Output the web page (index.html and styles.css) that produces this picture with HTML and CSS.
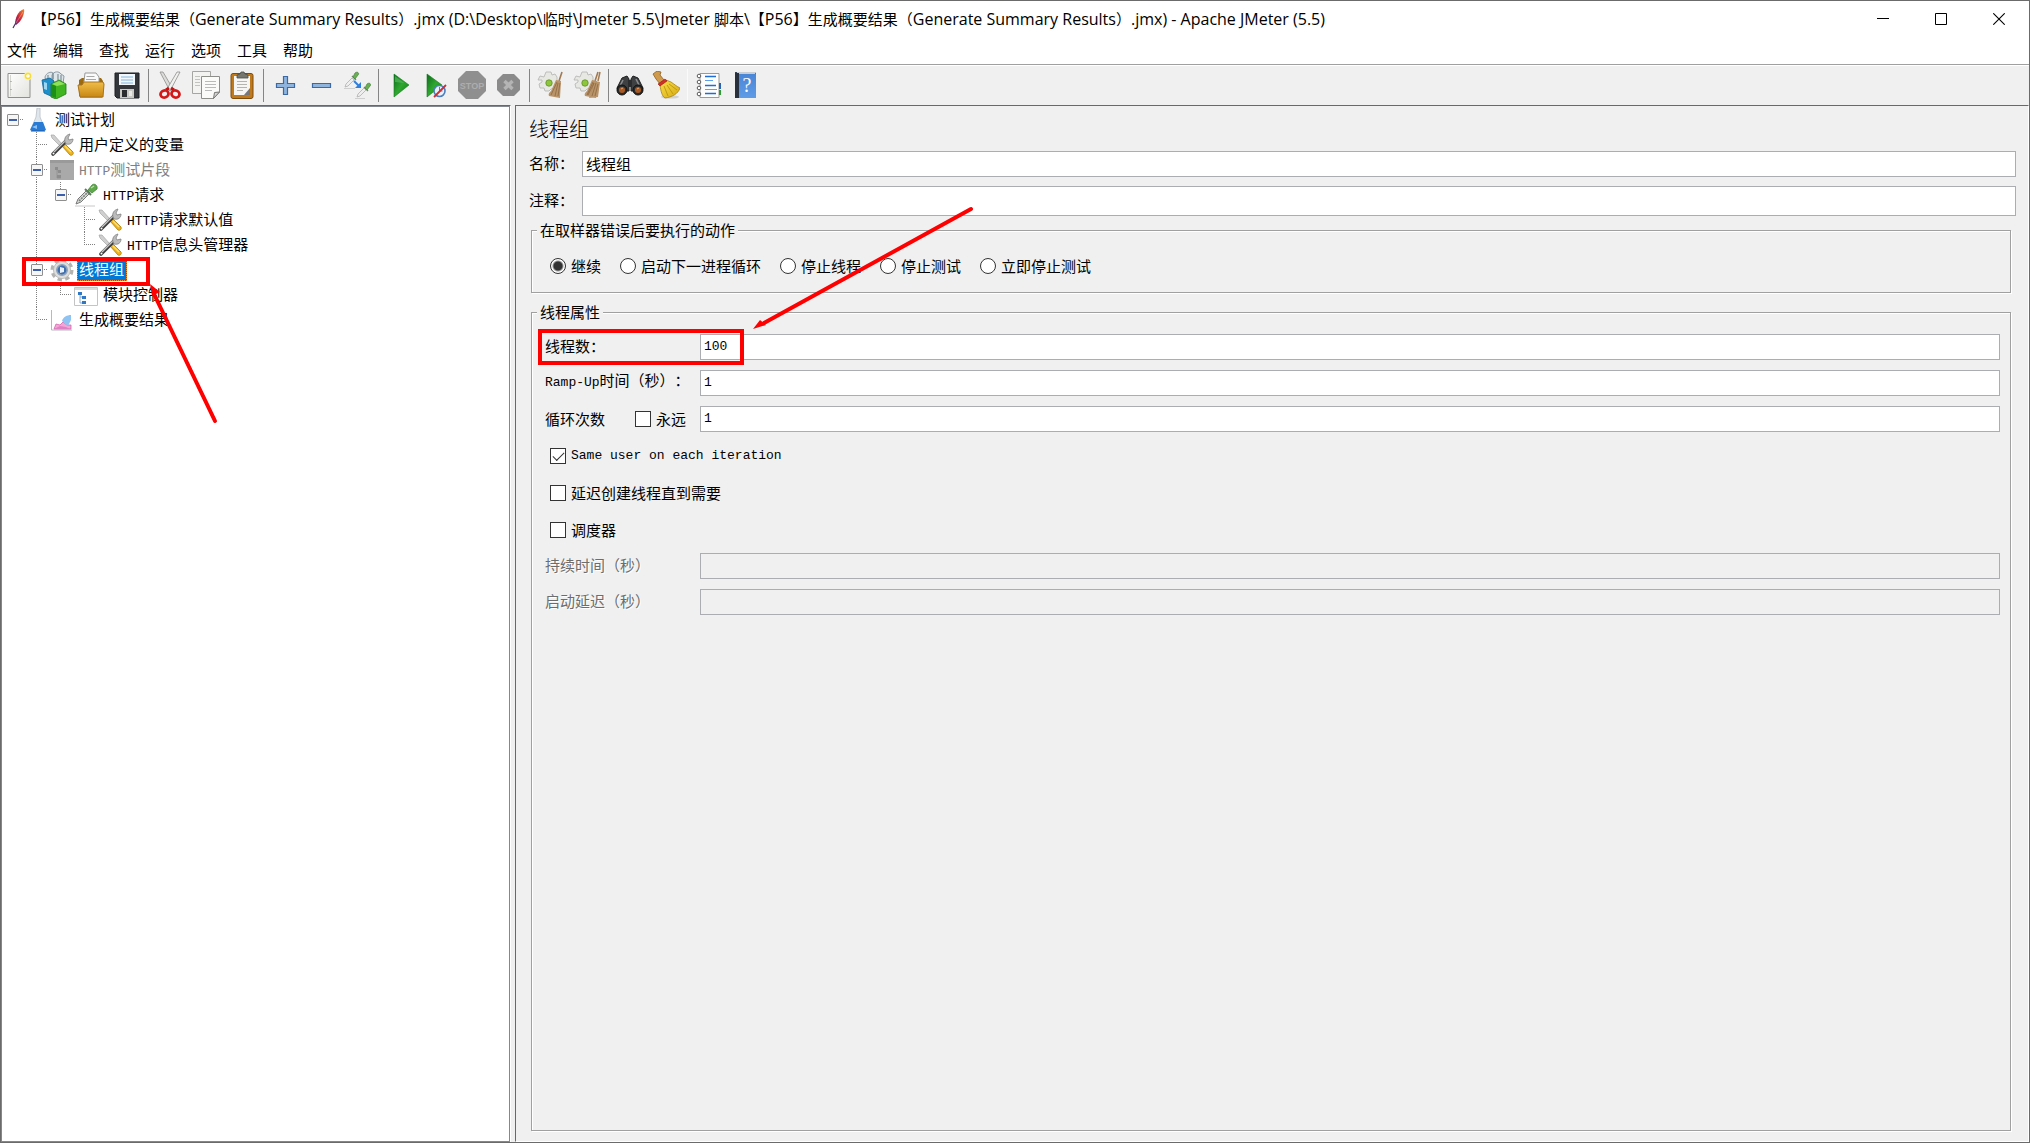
FILE: index.html
```html
<!DOCTYPE html>
<html lang="zh-CN">
<head>
<meta charset="utf-8">
<title>Apache JMeter (5.5)</title>
<link rel="stylesheet" href="styles.css">
</head>
<body>
<svg class="defs" aria-hidden="true">
  <defs>
    <linearGradient id="gGreen" x1="0" y1="0" x2="1" y2="1"><stop offset="0" stop-color="#0d6b1c"/><stop offset=".5" stop-color="#2fa82f"/><stop offset="1" stop-color="#0b7a12"/></linearGradient>
    <linearGradient id="gFolder" x1="0" y1="0" x2="0" y2="1"><stop offset="0" stop-color="#f0bd4a"/><stop offset="1" stop-color="#c98712"/></linearGradient>
    <linearGradient id="gPage" x1="0" y1="0" x2="1" y2="1"><stop offset="0" stop-color="#ffffff"/><stop offset="1" stop-color="#e2e2de"/></linearGradient>
    <linearGradient id="gBroom" x1="0" y1="0" x2="1" y2="1"><stop offset="0" stop-color="#fbe14c"/><stop offset="1" stop-color="#d6a70d"/></linearGradient>
    <linearGradient id="gBook" x1="0" y1="0" x2="0" y2="1"><stop offset="0" stop-color="#4a86d6"/><stop offset="1" stop-color="#5f9be6"/></linearGradient>
    <linearGradient id="gFeather" x1="0" y1="1" x2="1" y2="0"><stop offset="0" stop-color="#5d2a7a"/><stop offset=".4" stop-color="#c8203c"/><stop offset="1" stop-color="#f08a24"/></linearGradient>
    <symbol id="tools" viewBox="0 0 24 24">
      <path d="M1 2l3 0 8 9-2 2-8-8z" fill="#d0d0d0" stroke="#9a9a9a" stroke-width=".6"/>
      <path d="M12 13l3-2 8 8c1 2-1 4-3 3z" fill="#f0b51c" stroke="#a9790c" stroke-width=".8"/>
      <path d="M15 13l6 6" stroke="#ffe27a" stroke-width="1.2"/>
      <path d="M3 21L16 8" stroke="#3f3f3f" stroke-width="3.6" stroke-linecap="round"/>
      <path d="M4 19L15 8" stroke="#c4c4c4" stroke-width="1.4"/>
      <path d="M15 9c-1-4 1-7 5-8l-2 4 1 2 4-1c0 4-3 6-7 5z" fill="#bcbcbc" stroke="#808080" stroke-width=".8"/>
      <circle cx="3.500" cy="20.500" r="1" fill="#fff"/>
    </symbol>
    <symbol id="dropper" viewBox="0 0 24 24">
      <path d="M1 23h20" stroke="#c8c8c8" stroke-width="1"/>
      <path d="M2 21l2-5 9-9 3 3-9 9z" fill="#d8dcd8" stroke="#777" stroke-width="1"/>
      <path d="M5 18l8-8" stroke="#7b817b" stroke-width="1.6" stroke-dasharray="2 1"/>
      <path d="M11 6l6 6" stroke="#5c7a5c" stroke-width="2"/>
      <path d="M14 7l4-5c2-2 6 0 5 4l-5 4z" fill="#5fa94c" stroke="#3f8433" stroke-width=".8"/>
      <path d="M17 5l3-2" stroke="#b9e0a8" stroke-width="1.400"/>
    </symbol>
    <symbol id="broomSmall" viewBox="0 0 26 28">
      <path d="M9 1h5l1 3 3-1 2 3v6h-1l1 4-6 2-2 2H8l-1-3-4 0-1-4 3-2v-2L1 9l2-4 4 1z" fill="#e7e7e4" stroke="#b8b8b5" stroke-width=".9"/>
      <circle cx="12" cy="12" r="3.200" fill="#8dc63a" stroke="#5f8f24" stroke-width=".8"/>
      <path d="M25 1l-3 9" stroke="#a07a50" stroke-width="1.600"/>
      <path d="M19 9l5 1-1 17-11-2c-1-2 0-3 2-5z" fill="#b9946a"/>
      <path d="M20 11l-6 13M21 12l-3 13M23 12l-2 13" stroke="#8d6740" stroke-width=".8"/>
    </symbol>
  </defs>
</svg>

<div class="window">
  <header class="titlebar">
    <svg class="feather" viewBox="0 0 14 20" aria-hidden="true"><path d="M1 19L6 10" stroke="#4a2c63" stroke-width="1.200"/><path d="M3 15C3 9 6 2 12 0c1 4-2 12-8 16z" fill="url(#gFeather)"/><path d="M4 14L11 3" stroke="#fff" stroke-opacity=".45" stroke-width=".7"/></svg>
    <h1 class="caption"><span class="cjk">【</span>P56<span class="cjk">】生成概要结果（</span>Generate Summary Results<span class="cjk">）</span>.jmx (D:\Desktop\<span class="cjk">临时</span>\Jmeter 5.5\Jmeter <span class="cjk">脚本</span>\<span class="cjk">【</span>P56<span class="cjk">】生成概要结果（</span>Generate Summary Results<span class="cjk">）</span>.jmx) - Apache JMeter (5.5)</h1>
    <div class="winbuttons">
      <button type="button" aria-label="最小化"><svg viewBox="0 0 12 12"><path d="M0 5.500h12" stroke="#000"/></svg></button>
      <button type="button" aria-label="最大化"><svg viewBox="0 0 12 12"><path d="M.5.5h11v11H.5z" fill="none" stroke="#000"/></svg></button>
      <button type="button" aria-label="关闭"><svg viewBox="0 0 12 12"><path d="M.3.3l11.400 11.400M11.700.3L.3 11.700" stroke="#000" stroke-width="1.100"/></svg></button>
    </div>
  </header>

  <nav class="menubar">
    <button type="button">文件</button>
    <button type="button">编辑</button>
    <button type="button">查找</button>
    <button type="button">运行</button>
    <button type="button">选项</button>
    <button type="button">工具</button>
    <button type="button">帮助</button>
  </nav>

  <div class="toolbar" role="toolbar">
    <button type="button" aria-label="新建"><svg viewBox="0 0 28 28"><path d="M3 2.500h22v24H3z" fill="url(#gPage)" stroke="#8e8e8a"/><path d="M5.500 4v21" stroke="#d5d5d2"/><circle cx="23" cy="5" r="4" fill="#fdf3a0"/><circle cx="23" cy="5" r="2.500" fill="#fff" stroke="#f3dc3c" stroke-width="1.400"/><path d="M6 10v1M6 18v1" stroke="#888"/></svg></button>
    <button type="button" aria-label="模板"><svg viewBox="0 0 28 28"><path d="M4 6c1-4 6-6 8-4v9H5zM11 4c2-4 7-4 9-1l3 2-1 8H11z" fill="#dfe6ea" stroke="#8b9aa5"/><path d="M7 4v5M12 2v6M17 3v6M20 4v6" stroke="#7f8f9a" stroke-width="1.200"/><path d="M1 9l8-2 4 3-1 16-9-4z" fill="#1f8fcb" stroke="#0d6698" stroke-width=".8"/><path d="M3 11l3 1v7l-3-1z" fill="#9bd6f3"/><path d="M10 13l8-4 7 4v10l-10 5-5-2z" fill="#3fb51f" stroke="#1d7d10" stroke-width=".8"/><path d="M10 13l5 2v12l-5-2z" fill="#1b8f16"/><path d="M11 13l7-3 6 3-8 2z" fill="#8fe05a"/></svg></button>
    <button type="button" aria-label="打开"><svg viewBox="0 0 28 28"><path d="M2 9l3-2h19l2 3v15H2z" fill="#9b6a10"/><path d="M8 2h11l3 4v12H6z" fill="#fafafa" stroke="#999"/><path d="M9.500 5.500h8M9 8.500h10M9 11.500h10" stroke="#a8a8a8"/><path d="M1 14h4l2-3h19l1 2-1 13H3z" fill="url(#gFolder)" stroke="#a8731a"/><path d="M3 26.500h22" stroke="#8b6a31" stroke-opacity=".5"/></svg></button>
    <button type="button" aria-label="保存"><svg viewBox="0 0 28 28"><path d="M2 2h24v25H4l-2-2z" fill="#33363b"/><path d="M2 2h24v25H4l-2-2z" fill="none" stroke="#1c1e22"/><path d="M6 3h16v11H6z" fill="#f2f7fb"/><path d="M8 6h12M8 9h12M8 12h12" stroke="#86b4dc"/><path d="M7 18h14v9H7z" fill="#c9c9c6"/><path d="M9 19h5v7H9z" fill="#2a2c30"/><path d="M16 20h3v5h-3z" fill="#e9e9e7"/></svg></button>
    <span class="sep"></span>
    <button type="button" aria-label="剪切"><svg viewBox="0 0 28 28"><path d="M4 1l3 0 10 17-3 2z" fill="#dcdcda" stroke="#8d8d8a" stroke-width=".8"/><path d="M24 1l-3 0L11 18l3 2z" fill="#f1f1ef" stroke="#8d8d8a" stroke-width=".8"/><path d="M13 17l-3 2M15 17l3 2" stroke="#c31313" stroke-width="3"/><ellipse cx="8.500" cy="23" rx="4" ry="3.400" fill="none" stroke="#d41818" stroke-width="2.800" transform="rotate(-20 8.500 23)"/><ellipse cx="19.500" cy="23" rx="4" ry="3.400" fill="none" stroke="#d41818" stroke-width="2.800" transform="rotate(20 19.500 23)"/></svg></button>
    <button type="button" aria-label="复制"><svg viewBox="0 0 28 28"><path d="M.5.5h18v22H.5z" fill="#f3f3f1" stroke="#a5a5a2"/><path d="M3 5.500h5M3 8.500h5M3 11.500h5M3 14.500h5" stroke="#c2c2bf"/><path d="M9.500 5.500h18V21l-6 6.500h-12z" fill="#fbfbfa" stroke="#8e8e8b"/><path d="M13 10.500h11M13 13.500h11M13 16.500h11M13 19.500h7" stroke="#bababa"/><path d="M21.500 27.500l1-6 5-.5z" fill="#d3d3d0" stroke="#777"/></svg></button>
    <button type="button" aria-label="粘贴"><svg viewBox="0 0 28 28"><rect x="3" y="2.500" width="22" height="25" rx="2" fill="#c07a1c" stroke="#7d4c0c"/><path d="M6 5h16v19H6z" fill="#f6f6f4"/><path d="M9 10.500h10M9 13.500h10M9 16.500h10M9 19.500h6" stroke="#b4b4b1"/><path d="M22 17v7h-6z" fill="#77777a"/><path d="M9 7V4l3-1 1-2h3l1 2 3 1v3z" fill="#75776f" stroke="#4d4f49" stroke-width=".8"/></svg></button>
    <span class="sep"></span>
    <button type="button" aria-label="展开"><svg viewBox="0 0 28 28"><path d="M12.500 5.500h4v7h7v4h-7v7h-4v-7h-7v-4h7z" fill="#8fb4de" stroke="#3a69a6" stroke-width="1.200"/></svg></button>
    <button type="button" aria-label="折叠"><svg viewBox="0 0 28 28"><path d="M5.500 12.500h18v4h-18z" fill="#8fb4de" stroke="#3a69a6" stroke-width="1.200"/></svg></button>
    <button type="button" aria-label="切换"><svg viewBox="0 0 28 28"><path d="M1 17.500h11M12 27.500h10" stroke="#cfcfcf"/><path d="M2 16l1-3 6-6 2 2-6 6zM14 26l1-3 6-6 2 2-6 6z" fill="#eee" stroke="#b0b0b0" stroke-width=".8"/><path d="M9 5l4 4M21 16l4 4" stroke="#6f8b6f" stroke-width="1.400"/><path d="M10 6l2-4c2-2 5 0 3 2l-3 4zM22 17l2-4c2-2 5 0 3 2l-3 4z" fill="#69b052" stroke="#43853a" stroke-width=".7"/><path d="M11 10l5 5" stroke="#2f7fe0" stroke-width="2"/><path d="M18 11v6h-6z" fill="#2f7fe0"/></svg></button>
    <span class="sep"></span>
    <button type="button" aria-label="启动"><svg viewBox="0 0 28 28"><path d="M8 3l15 11L8 26z" fill="url(#gGreen)" stroke="#157a1e" stroke-width=".6"/><path d="M9 5l9 7-9-1z" fill="#5fbf68" opacity=".6"/></svg></button>
    <button type="button" aria-label="不停顿开始"><svg viewBox="0 0 28 28"><path d="M5 3l15 11L5 26z" fill="url(#gGreen)" stroke="#157a1e" stroke-width=".6"/><circle cx="17.500" cy="20" r="5.500" fill="#e8f0fa" stroke="#4d7fbf" stroke-width="1.600"/><path d="M17.500 16v4h3" stroke="#4d7fbf" fill="none"/><path d="M12 26L24 14" stroke="#d52b2b" stroke-width="1.800"/></svg></button>
    <button type="button" aria-label="停止" disabled><svg viewBox="0 0 28 28"><path d="M8 0h12l8 8v12l-8 8H8l-8-8V8z" fill="#8f8f8f"/><text x="14" y="18" text-anchor="middle" class="stoptext">STOP</text></svg></button>
    <button type="button" aria-label="关闭线程" disabled><svg viewBox="0 0 28 28"><path d="M9 3h11l6 6v10l-6 6H9l-6-6V9z" fill="#8a8a8a"/><path d="M10.500 10l8 8M18.500 10l-8 8" stroke="#b4b4b4" stroke-width="3.400"/></svg></button>
    <span class="sep"></span>
    <button type="button" aria-label="清除"><svg viewBox="0 0 28 28"><use href="#broomSmall" x="0" y="0" width="26" height="28"/></svg></button>
    <button type="button" aria-label="清除全部"><svg viewBox="0 0 28 28"><use href="#broomSmall" x="0" y="0" width="26" height="28"/><path d="M27 1l-2 9" stroke="#a07a50" stroke-width="1.500"/><path d="M22 10l5 1-2 15-9 1z" fill="#b9946a"/><path d="M23 12l-4 13M25 13l-3 12M21 12l-6 12" stroke="#8d6740" stroke-width=".8"/></svg></button>
    <span class="sep"></span>
    <button type="button" aria-label="查找"><svg viewBox="0 0 28 28"><path d="M6 7l5-2 2 3v12H2l-1-3zM22 7l-5-2-2 3v12h11l1-3z" fill="#3e4042" stroke="#1d1e1f"/><path d="M12 9h4v7h-4z" fill="#2b2c2d"/><path d="M7 9l-3 6M20 8l3 6" stroke="#8b8d8f" stroke-width="1.600"/><circle cx="6" cy="19" r="5" fill="#2a2a2b" stroke="#111"/><circle cx="22" cy="19" r="5" fill="#2a2a2b" stroke="#111"/><circle cx="6" cy="19" r="3" fill="#a85a26"/><circle cx="22" cy="19" r="3" fill="#a85a26"/><path d="M5 18l2-1M21 18l2-1" stroke="#eaa56d"/></svg></button>
    <button type="button" aria-label="重置查找"><svg viewBox="0 0 28 28"><ellipse cx="18" cy="26" rx="9" ry="1.600" fill="#bbb" opacity=".6"/><path d="M1 3l4-3 4 1-1 3 4 5-4 4-4-5z" fill="#d09a4d" stroke="#8e5f1f" stroke-width=".8"/><path d="M8 14l6-5 5 2c3 2 5 4 9 6-2 6-8 9-15 10-3-2-4-6-5-13z" fill="url(#gBroom)" stroke="#a8830c" stroke-width=".8"/><path d="M12 15l4 10M15 14l6 9M17 13l8 6" stroke="#c19a12"/><path d="M6 13l7-5 2 2-7 5z" fill="#d3302c" stroke="#96150f" stroke-width=".6"/></svg></button>
    <span class="sep sep-light"></span>
    <button type="button" aria-label="函数助手"><svg viewBox="0 0 28 28"><path d="M5 2.500h19v24H5z" fill="#fdfdfd" stroke="#9a9a98"/><path d="M24 12h2v6h-2z" fill="#2762b8"/><path d="M24 19h2v5h-2z" fill="#2e9c33"/><path d="M10 5.500h11M10 14.500h11M10 22.500h11" stroke="#1f6ed8" stroke-width="1.600"/><path d="M10 9.500h8M10 18.500h12" stroke="#5f9ff0" stroke-width="1.200"/><g fill="#fff" stroke="#5b5b5b" stroke-width="1"><circle cx="4" cy="5" r="1.800"/><circle cx="4" cy="11" r="1.800"/><circle cx="4" cy="17" r="1.800"/><circle cx="4" cy="23" r="1.800"/></g></svg></button>
    <button type="button" aria-label="帮助"><svg viewBox="0 0 28 28"><path d="M4 1h20l1 2v24H4z" fill="#36465a"/><path d="M6 1h18v2H6z" fill="#c9ced4"/><path d="M8 3h17v24H8z" fill="url(#gBook)"/><path d="M4 2h4v25H4z" fill="#27303c"/><text x="16" y="21" text-anchor="middle" class="helptext">?</text></svg></button>
  </div>

  <div class="workspace">
    <aside class="treepane">
      <ul class="tree" role="tree">
        <li><span class="g tail"><button type="button" class="exp" aria-label="折叠"></button></span><svg class="ico" viewBox="0 0 24 24"><path d="M11 0h3v9l5 12H5l5-12z" fill="#dfe6ec" stroke="#b8bfc6" stroke-width=".8"/><path d="M8 14h9l3 8-2 1H6l-2-1z" fill="#2a7bd4"/><path d="M6 19l5-2v4z" fill="#8cc2f5"/><path d="M5 23h14" stroke="#155aa8"/></svg><span class="name">测试计划</span></li>
        <li><span class="g"></span><span class="g tee"></span><svg class="ico"><use href="#tools"/></svg><span class="name">用户定义的变量</span></li>
        <li><span class="g"></span><span class="g vert tail"><button type="button" class="exp" aria-label="折叠"></button></span><svg class="ico" viewBox="0 0 24 24"><path d="M0 2h24v20H0z" fill="#a9a9a9"/><path d="M0 2h24v3H0z" fill="#9a9a9a"/><path d="M7 9v11h4M7 13h3" stroke="#949494" fill="none"/><path d="M5 9h3v3H5zM8 12h3v3H8zM7 17h4v3H7z" fill="#8c8c8c"/></svg><span class="name off"><span class="lat">HTTP</span>测试片段</span></li>
        <li><span class="g"></span><span class="g vert"></span><span class="g half tail"><button type="button" class="exp" aria-label="折叠"></button></span><svg class="ico"><use href="#dropper"/></svg><span class="name"><span class="lat">HTTP</span>请求</span></li>
        <li><span class="g"></span><span class="g vert"></span><span class="g"></span><span class="g tee"></span><svg class="ico"><use href="#tools"/></svg><span class="name"><span class="lat">HTTP</span>请求默认值</span></li>
        <li><span class="g"></span><span class="g vert"></span><span class="g"></span><span class="g elbow"></span><svg class="ico"><use href="#tools"/></svg><span class="name"><span class="lat">HTTP</span>信息头管理器</span></li>
        <li><span class="g"></span><span class="g vert tail"><button type="button" class="exp" aria-label="折叠"></button></span><svg class="ico" viewBox="0 0 24 24"><circle cx="12" cy="12" r="9.500" fill="none" stroke="#b3b3b1" stroke-width="4" stroke-dasharray="4.200 3.260"/><circle cx="12" cy="12" r="8.600" fill="#dededc" stroke="#b4b4b2" stroke-width=".8"/><circle cx="12" cy="12" r="5.200" fill="#3f6fae" stroke="#8fa3bb" stroke-width="1.600"/><path d="M10 9l4 1v4l-4 1z" fill="#e8f0fa"/></svg><span class="name picked">线程组</span></li>
        <li><span class="g"></span><span class="g vert"></span><span class="g elbow"></span><svg class="ico" viewBox="0 0 24 24"><path d="M.5 4.500h23v18H.5z" fill="#fff" stroke="#c4c4c4"/><path d="M1 5h22v2H1z" fill="#d9d9d9"/><path d="M6 10v10h4M6 14h4" stroke="#8aa8cc" fill="none"/><path d="M4 9h4v3H4zM8 13h4v3H8zM8 18h4v3H8z" fill="#2f78c8"/></svg><span class="name">模块控制器</span></li>
        <li><span class="g"></span><span class="g elbow"></span><svg class="ico" viewBox="0 0 24 24"><path d="M1.500 2v20H22" stroke="#b8b8c4" fill="none"/><path d="M4 21l2-5 4 1 3-3 4 3 4 0v4z" fill="#f3a6d6" stroke="#d468ae" stroke-width=".8"/><path d="M12 13c1-4 5-6 9-6v5l-3 6z" fill="#8fc3f2"/><path d="M4 21l6-3 6 1 4 2z" fill="#e07fc4"/></svg><span class="name">生成概要结果</span></li>
      </ul>
    </aside>

    <main class="panel">
      <h2 class="heading">线程组</h2>
      <div class="field"><label for="name">名称：</label><input type="text" id="name" value="线程组"></div>
      <div class="field tall"><label for="note">注释：</label><input type="text" id="note" value=""></div>

      <fieldset class="actions">
        <legend>在取样器错误后要执行的动作</legend>
        <label><input type="radio" name="onerror" checked>继续</label>
        <label><input type="radio" name="onerror">启动下一进程循环</label>
        <label><input type="radio" name="onerror">停止线程</label>
        <label><input type="radio" name="onerror">停止测试</label>
        <label><input type="radio" name="onerror">立即停止测试</label>
      </fieldset>

      <fieldset class="props">
        <legend>线程属性</legend>
        <div class="prop"><label for="threads">线程数：</label><input type="text" class="lat" id="threads" value="100"></div>
        <div class="prop"><label for="ramp"><span class="lat">Ramp-Up</span>时间（秒）：</label><input type="text" class="lat" id="ramp" value="1"></div>
        <div class="prop"><span class="split"><label for="loops">循环次数</label><label class="tick"><input type="checkbox">永远</label></span><input type="text" class="lat" id="loops" value="1"></div>
        <label class="tick solo lat"><input type="checkbox" checked>Same user on each iteration</label>
        <label class="tick solo"><input type="checkbox">延迟创建线程直到需要</label>
        <label class="tick solo"><input type="checkbox">调度器</label>
        <div class="prop dim"><label for="duration">持续时间（秒）</label><input type="text" id="duration" disabled></div>
        <div class="prop dim"><label for="delay">启动延迟（秒）</label><input type="text" id="delay" disabled></div>
      </fieldset>
    </main>
  </div>
</div>

<svg class="marks" aria-hidden="true">
  <g fill="none" stroke="#fe0000" stroke-width="4" stroke-linecap="round">
    <rect x="24" y="259" width="124" height="25"/>
    <rect x="540" y="331" width="202" height="32"/>
    <path d="M154 294L215 421"/>
    <path d="M971 209L764 323"/>
  </g>
  <path d="M150 284l10 8-8 4zM753 329l7-9 6 5z" fill="#fe0000"/>
</svg>
</body>
</html>
```
FILE: styles.css
```css
* {
  box-sizing: border-box;
}

body {
  margin: 0;
  background: #f0f0f0;
  color: #000;
  font-family: "Noto Sans CJK SC", sans-serif;
  font-size: 15px;
  line-height: 20px;
  text-spacing-trim: space-all;
}

button,
input {
  font: inherit;
  color: inherit;
}

button {
  margin: 0;
  padding: 0;
  border: 0;
  background: none;
}

.defs {
  position: absolute;
  width: 0;
  height: 0;
}

.window {
  display: flex;
  flex-direction: column;
  min-height: 100vh;
  border: 1px solid #6b6b6b;
}

/* Title bar and menu */

.titlebar {
  display: flex;
  align-items: center;
  height: 37px;
  padding: 0 1px 2px 11px;
  background: #fff;
}

.feather {
  width: 14px;
  height: 20px;
}

.caption {
  flex: 1;
  margin: 0 0 0 6px;
  font: 400 16px/20px "Open Sans", sans-serif;
  white-space: nowrap;
}

.cjk {
  font-family: "Noto Sans CJK SC", sans-serif;
  font-size: 15px;
}

.winbuttons {
  display: flex;
}

.winbuttons button {
  display: flex;
  align-items: center;
  justify-content: center;
  width: 58px;
  height: 35px;
}

.winbuttons svg {
  width: 12px;
  height: 12px;
}

.menubar {
  display: flex;
  gap: 16px;
  height: 27px;
  padding: 1px 6px 3px;
  background: #fff;
  border-bottom: 1px solid #a0a0a0;
}

/* Toolbar */

.toolbar {
  display: flex;
  align-items: center;
  height: 40px;
  padding-bottom: 1px;
  border-top: 1px solid #fff;
}

.toolbar button {
  display: flex;
  align-items: center;
  justify-content: center;
  width: 36px;
  height: 36px;
}

.toolbar svg {
  width: 28px;
  height: 28px;
}

.sep {
  width: 1px;
  height: 33px;
  margin: 0 3px;
  background: #858585;
}

.sep-light {
  background: #fafafa;
}

.stoptext {
  font: 700 9px "Liberation Sans", sans-serif;
  fill: #adadad;
}

.helptext {
  font: 400 20px "Liberation Serif", serif;
  fill: #fff;
}

/* Workspace */

.workspace {
  display: flex;
  flex: 1;
  gap: 4px;
}

.treepane {
  flex: 0 0 510px;
  border-top: 1px solid #696969;
  border-right: 1px solid #fff;
}

.tree {
  height: 100%;
  margin: 0;
  padding: 0;
  list-style: none;
  background: #fff;
  border: 1px solid #828790;
}

.tree li {
  display: flex;
  align-items: center;
  height: 25px;
}

.g {
  --dots-v: repeating-linear-gradient(to bottom, #808080 0 1px, transparent 1px 2px);
  --dots-h: repeating-linear-gradient(to right, #808080 0 1px, transparent 1px 2px);
  display: flex;
  align-items: center;
  width: 24px;
  height: 25px;
  padding-left: 5px;
  background-repeat: no-repeat;
}

.vert {
  background-image: var(--dots-v);
  background-position: 10px 0;
  background-size: 1px 100%;
}

.tail {
  background-image: var(--dots-h);
  background-position: 18px 12px;
  background-size: 4px 1px;
}

.vert.tail,
.half.tail,
.tee,
.elbow {
  background-image: var(--dots-v), var(--dots-h);
}

.vert.tail {
  background-position: 10px 0, 18px 12px;
  background-size: 1px 100%, 4px 1px;
}

.half.tail {
  background-position: 10px 0, 18px 12px;
  background-size: 1px 12px, 4px 1px;
}

.tee {
  background-position: 10px 0, 10px 12px;
  background-size: 1px 100%, 12px 1px;
}

.elbow {
  background-position: 10px 0, 10px 12px;
  background-size: 1px 12px, 12px 1px;
}

.exp {
  width: 12px;
  height: 12px;
  border: 1px solid #8f8f8f;
  border-radius: 1px;
  background: linear-gradient(#3b5fad, #3b5fad) center / 8px 2px no-repeat, #f6f6f6;
}

.ico {
  width: 24px;
  height: 24px;
}

.name {
  height: 22px;
  margin-left: 3px;
  padding: 0 3px 0 2px;
  white-space: nowrap;
}

.off {
  color: #808080;
}

.picked {
  background: #0078d7;
  color: #fff;
  outline: 1px dotted #ff8728;
  outline-offset: -1px;
}

.lat {
  font-family: "Liberation Mono", monospace;
  font-size: 13px;
}

/* Thread group editor */

.panel {
  display: flex;
  flex: 1;
  flex-direction: column;
  padding: 9px 12px 10px;
  border: 1px solid #696969;
  border-right-color: #fff;
  border-bottom-color: #fff;
}

.heading {
  margin: 0 0 0 1px;
  font-size: 20px;
  font-weight: 300;
  line-height: 28px;
}

input[type="text"] {
  flex: 1;
  min-width: 0;
  height: 26px;
  padding: 0 3px 1px;
  background: #fff;
  border: 1px solid #abadb3;
  border-radius: 0;
}

.field {
  display: flex;
  align-items: center;
  gap: 8px;
  margin: 8px 0 0 1px;
}

.field + .field {
  margin-top: 9px;
}

.field label {
  width: 45px;
  padding-bottom: 2px;
}

.field input[type="text"] {
  padding-bottom: 2px;
}

.field.tall input[type="text"] {
  height: 30px;
}

fieldset {
  min-width: 0;
  margin: 6px 5px 0 3px;
  padding: 0 10px;
  border: 1px solid #a0a0a0;
  box-shadow: 1px 1px #fff, inset 1px 1px #fff;
}

legend {
  padding: 0 3px;
  background: #f0f0f0;
  line-height: 16px;
}

.actions {
  display: flex;
  gap: 19px;
  height: 71px;
  padding: 18px 18px 0;
}

.actions legend {
  margin-left: -13px;
}

.actions label,
.tick {
  display: flex;
  align-items: center;
  gap: 5px;
  height: 20px;
}

.props {
  display: flex;
  flex: 1;
  flex-direction: column;
  gap: 10px;
  margin-top: 11px;
  padding: 14px 10px 0 13px;
}

.props legend {
  margin-left: -8px;
}

.prop {
  display: flex;
  align-items: center;
}

.prop > label,
.split {
  flex: 0 0 155px;
  padding-bottom: 3px;
  white-space: nowrap;
}

.split {
  display: flex;
  align-items: center;
  justify-content: space-between;
  padding: 0 14px 0 0;
}

.solo {
  height: 27px;
  padding-left: 5px;
}

.dim {
  color: #6d6d6d;
  text-shadow: 1px 1px #fff;
}

.dim input[type="text"] {
  background: #f0f0f0;
}

input[type="radio"],
input[type="checkbox"] {
  width: 16px;
  height: 16px;
  margin: 0;
  appearance: none;
  background: #fff;
  border: 1px solid #333;
}

input[type="radio"] {
  border-radius: 50%;
}

input[type="radio"]:checked {
  background: radial-gradient(circle, #333 4px, #fff 6px);
}

input[type="checkbox"]:checked::before {
  content: "";
  display: block;
  width: 10px;
  height: 5px;
  margin: 3px 0 0 2px;
  border: solid #333;
  border-width: 0 0 1px 1px;
  transform: rotate(-45deg);
}

/* Red call-outs drawn over the window */

.marks {
  position: absolute;
  top: 0;
  left: 0;
  width: 1000px;
  height: 440px;
  pointer-events: none;
}
```
